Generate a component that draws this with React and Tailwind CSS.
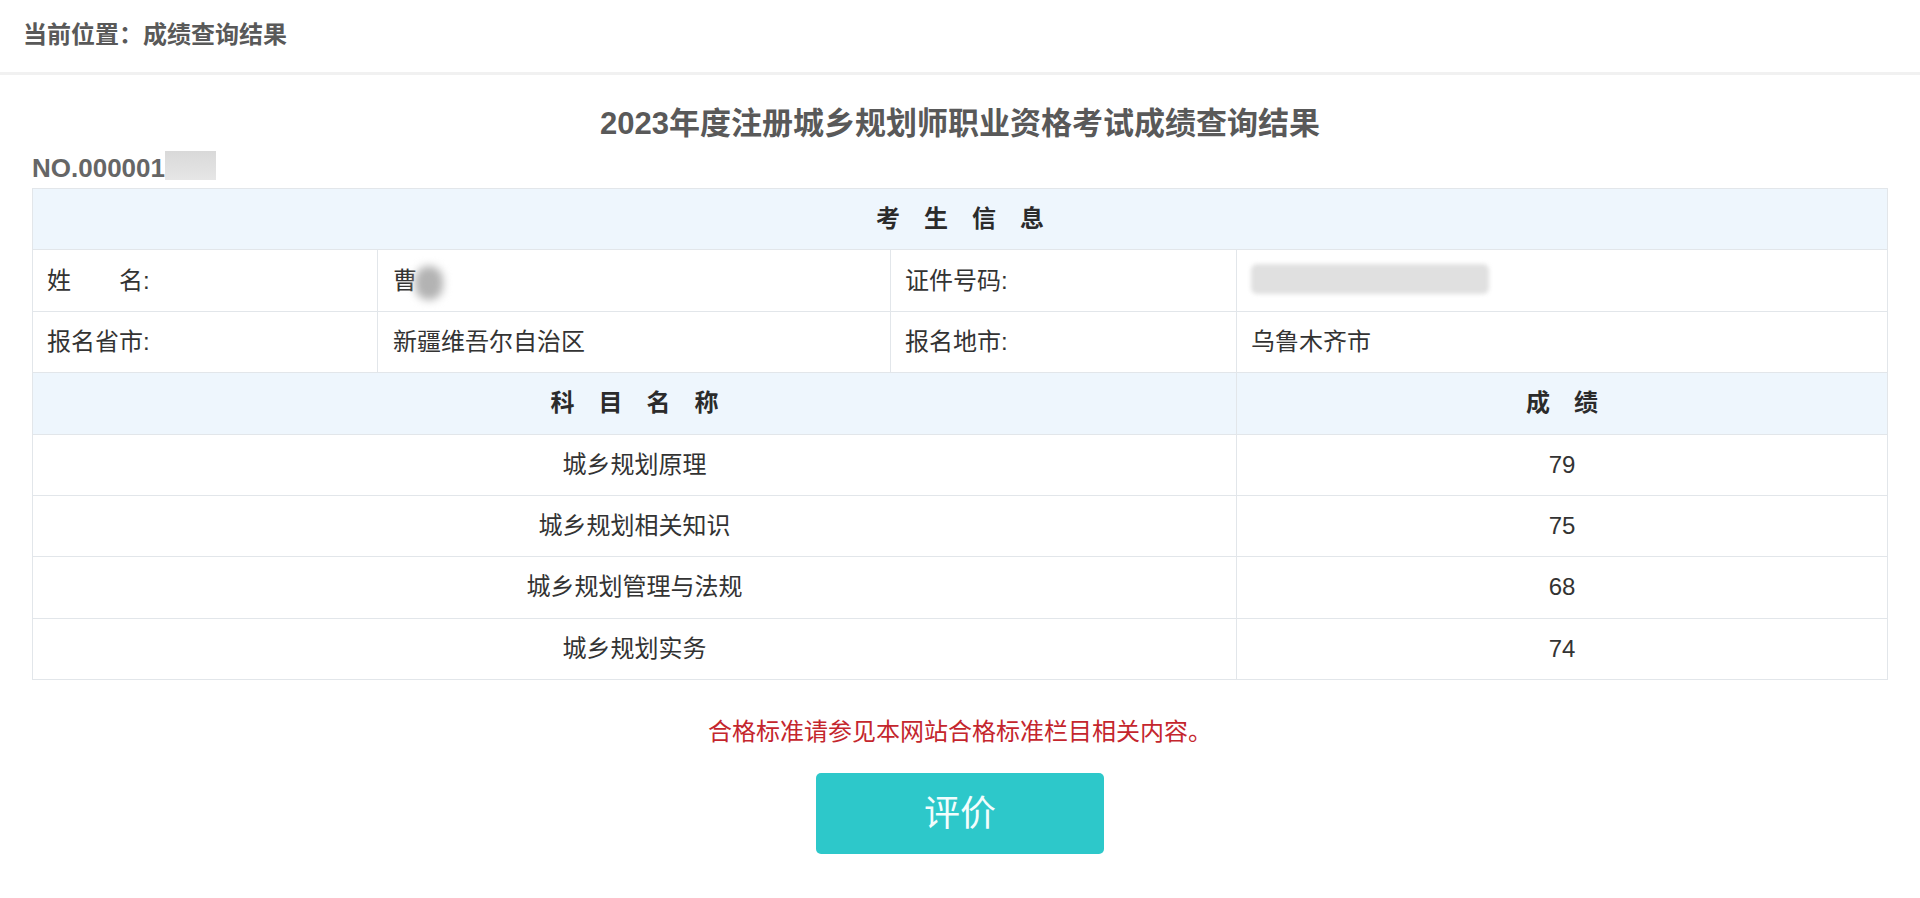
const font = { fontFamily: '"Liberation Sans", "Noto Sans CJK SC", sans-serif' };

const subjects = [
  { name: "城乡规划原理", score: "79" },
  { name: "城乡规划相关知识", score: "75" },
  { name: "城乡规划管理与法规", score: "68" },
  { name: "城乡规划实务", score: "74" },
];

function HeadRow({ children }) {
  return (
    <div className="h-[61.375px] flex items-center justify-center bg-[#eef6fd] border-b border-[#e2e6ea] text-[24px] font-bold text-[#2b2b2b]">
      {children}
    </div>
  );
}

export default function App() {
  return (
    <div className="min-h-screen w-full bg-white text-[#333]" style={font}>
      {/* breadcrumb */}
      <div className="h-[75px] flex items-center pl-[23px] pb-[3px] border-b-[3px] border-[#f1f1f1]">
        <span className="text-[24px] font-bold text-[#595959]">当前位置：成绩查询结果</span>
      </div>

      <div className="pt-[25px]">
        <div className="h-[48px] flex items-center justify-center">
          <h1 className="text-[31px] font-bold text-[#595959]">2023年度注册城乡规划师职业资格考试成绩查询结果</h1>
        </div>

        <div className="h-[40px] flex items-center pl-[32px]">
          <span className="text-[26px] font-bold text-[#666]">NO.000001</span>
          <span className="inline-block w-[51px] h-[29px] -mt-[6px] bg-gradient-to-b from-[#d9d9d9] to-[#e6e6e6]"></span>
        </div>

        {/* result table */}
        <div className="mx-[32px] border border-b-0 border-[#e2e6ea]">
          <HeadRow>考　生　信　息</HeadRow>

          <div className="h-[61.375px] grid grid-cols-[344px_513px_346px_1fr] border-b border-[#e2e6ea] text-[24px]">
            <div className="flex items-center pl-[14px]">姓　　名:</div>
            <div className="flex items-center pl-[15px] border-l border-[#e2e6ea]">
              <span>曹</span>
              <span className="inline-block w-[28px] h-[34px] ml-[-2px] mt-[4px] rounded-full bg-[#b3b3b3] blur-[4px]"></span>
            </div>
            <div className="flex items-center pl-[14px] border-l border-[#e2e6ea]">证件号码:</div>
            <div className="flex items-center pl-[14px] border-l border-[#e2e6ea]">
              <span className="inline-block w-[238px] h-[30px] -mt-[4px] rounded-[6px] bg-[#e0e0e0] blur-[2px]"></span>
            </div>
          </div>

          <div className="h-[61.375px] grid grid-cols-[344px_513px_346px_1fr] border-b border-[#e2e6ea] text-[24px]">
            <div className="flex items-center pl-[14px]">报名省市:</div>
            <div className="flex items-center pl-[15px] border-l border-[#e2e6ea]">新疆维吾尔自治区</div>
            <div className="flex items-center pl-[14px] border-l border-[#e2e6ea]">报名地市:</div>
            <div className="flex items-center pl-[14px] border-l border-[#e2e6ea]">乌鲁木齐市</div>
          </div>

          <div className="h-[61.375px] grid grid-cols-[1203px_1fr] bg-[#eef6fd] border-b border-[#e2e6ea] text-[24px] font-bold text-[#2b2b2b]">
            <div className="flex items-center justify-center">科　目　名　称</div>
            <div className="flex items-center justify-center border-l border-[#e2e6ea]">成　绩</div>
          </div>

          {subjects.map((s) => (
            <div key={s.name} className="h-[61.375px] grid grid-cols-[1203px_1fr] border-b border-[#e2e6ea] text-[24px]">
              <div className="flex items-center justify-center">{s.name}</div>
              <div className="flex items-center justify-center border-l border-[#e2e6ea]">{s.score}</div>
            </div>
          ))}
        </div>

        <div className="mt-[32px] h-[40px] flex items-center justify-center">
          <p className="text-[24px] text-[#c4262d]">合格标准请参见本网站合格标准栏目相关内容。</p>
        </div>

        <div className="mt-[21px] flex justify-center">
          <button className="w-[288px] h-[81px] rounded-[5px] bg-[#2dc8ca] text-[36px] text-[#f2fdfd]">评价</button>
        </div>
      </div>
    </div>
  );
}
